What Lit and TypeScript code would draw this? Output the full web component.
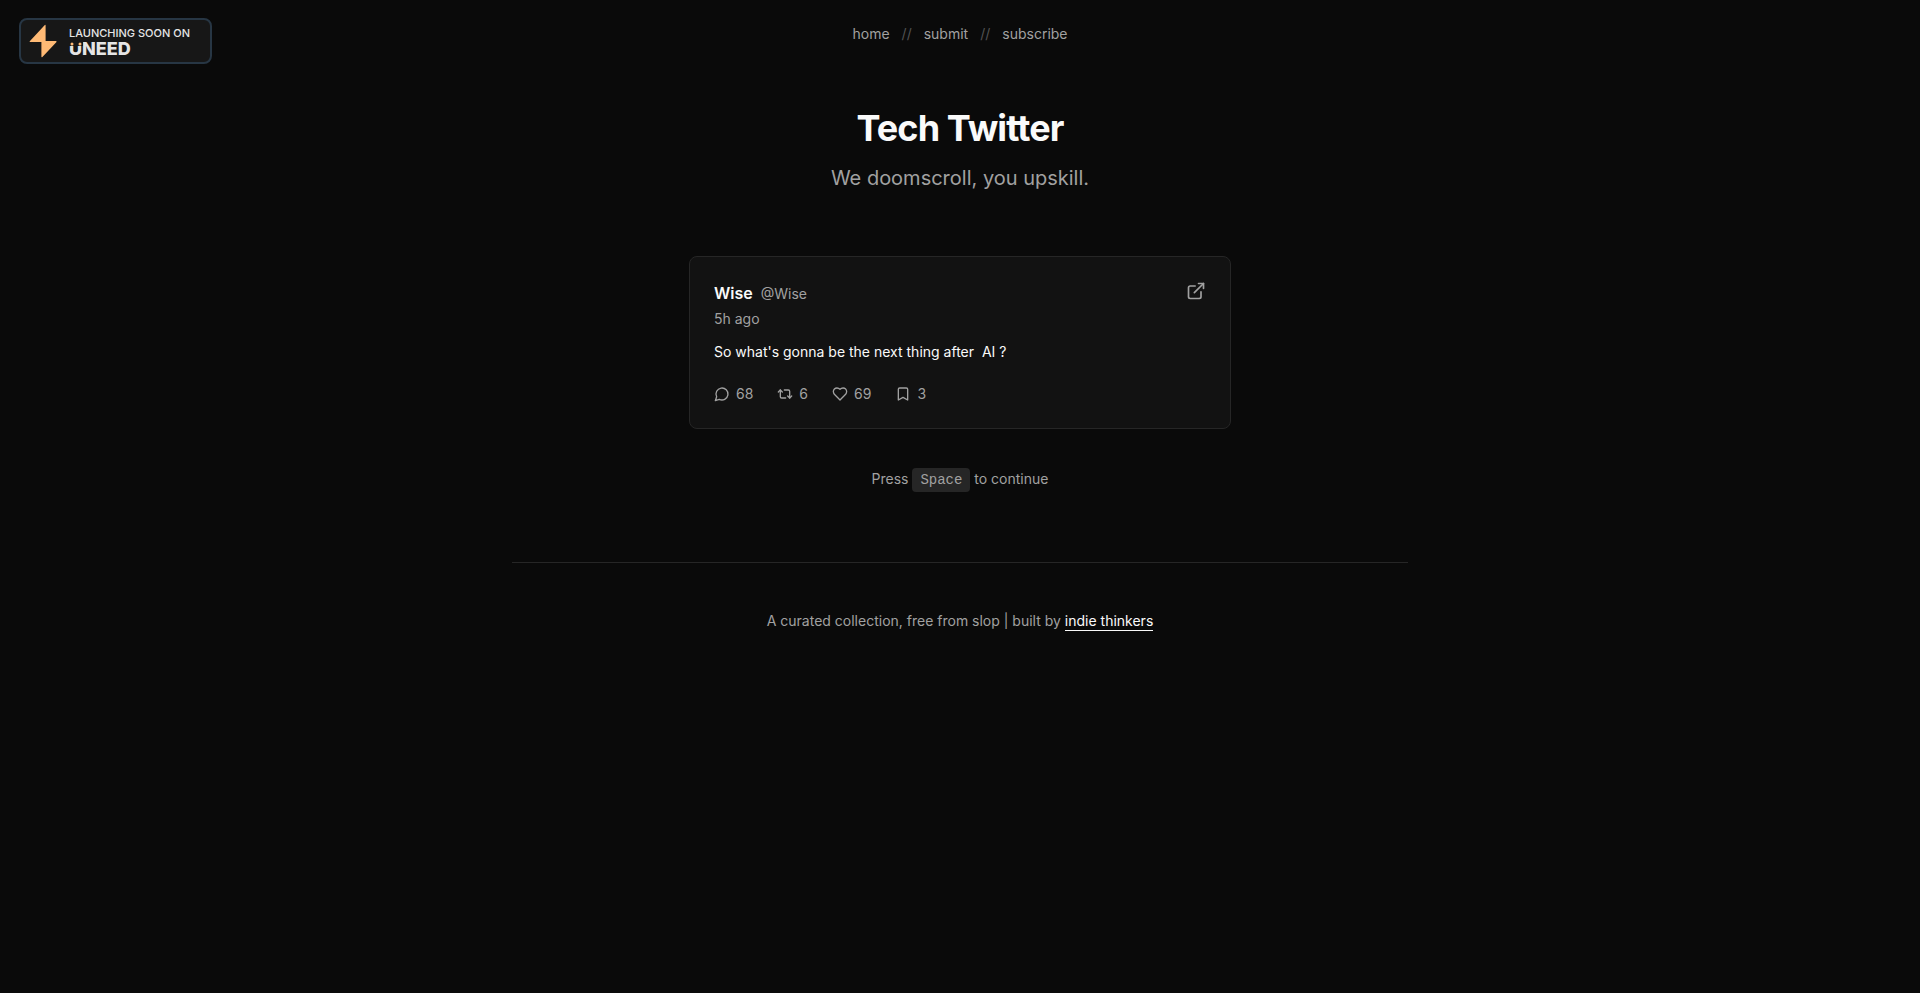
import { LitElement, html, css, svg } from "lit";
import { customElement, property } from "lit/decorators.js";

const icons = {
  reply: svg`<path d="M7.9 20A9 9 0 1 0 4 16.1L2 22Z" />`,
  repost: svg`<path d="m2 9 3-3 3 3" /><path d="M13 18H7a2 2 0 0 1-2-2V6" /><path d="m22 15-3 3-3-3" /><path d="M11 6h6a2 2 0 0 1 2 2v10" />`,
  like: svg`<path d="M19 14c1.49-1.46 3-3.21 3-5.5A5.5 5.5 0 0 0 16.5 3c-1.76 0-3 .5-4.5 2-1.5-1.5-2.74-2-4.5-2A5.5 5.5 0 0 0 2 8.5c0 2.3 1.5 4.05 3 5.5l7 7Z" />`,
  bookmark: svg`<path d="m19 21-7-4-7 4V5a2 2 0 0 1 2-2h10a2 2 0 0 1 2 2v16z" />`,
  external: svg`<path d="M18 13v6a2 2 0 0 1-2 2H5a2 2 0 0 1-2-2V8a2 2 0 0 1 2-2h6" /><path d="M15 3h6v6" /><path d="M10 14 21 3" />`,
};

type IconName = keyof typeof icons;

@customElement("line-icon")
export class LineIcon extends LitElement {
  @property() name: IconName = "reply";

  static styles = css`
    :host {
      display: block;
      width: 16px;
      height: 16px;
    }
    .icon {
      display: block;
      width: 100%;
      height: 100%;
      fill: none;
      stroke: currentColor;
      stroke-width: 2;
      stroke-linecap: round;
      stroke-linejoin: round;
    }
  `;

  render() {
    return html`<svg class="icon" viewBox="0 0 24 24" aria-hidden="true">${icons[this.name]}</svg>`;
  }
}

@customElement("launch-badge")
export class LaunchBadge extends LitElement {
  static styles = css`
    :host {
      display: block;
    }
    .badge {
      display: flex;
      align-items: center;
      gap: 12px;
      box-sizing: border-box;
      height: 46px;
      padding: 0 20px 0 8px;
      border: 2px solid #273644;
      border-radius: 8px;
      background: #171717;
      color: #e5e5e5;
      text-decoration: none;
    }
    .bolt {
      width: 28px;
      height: 34px;
      fill: #ffba75;
    }
    .label {
      display: flex;
      flex-direction: column;
      gap: 1px;
    }
    .caption {
      font-size: 11px;
      line-height: 14px;
      font-weight: 500;
      white-space: nowrap;
    }
    .brand {
      position: relative;
      font-size: 18px;
      line-height: 16px;
      font-weight: 800;
    }
    .dots {
      position: absolute;
      top: 1px;
      left: 0;
      width: 14px;
      height: 4px;
      background: #171717;
      fill: #ffba75;
    }
  `;

  render() {
    return html`
      <a class="badge" href="#uneed">
        <svg class="bolt" viewBox="0 0 28 34" aria-hidden="true">
          <path d="M15.6 1.2 1 17q-.9 1 .4 1H12.400v14.500q0 1.400 1 .4L27.300 18.200q.9-1.100-.4-1.100H16.600V1.600q0-1.300-1-.4Z" />
        </svg>
        <span class="label">
          <span class="caption">LAUNCHING SOON ON</span>
          <span class="brand">UNEED<svg class="dots" viewBox="0 0 14 4" aria-hidden="true">
              <circle cx="3" cy="2" r="1.500" />
              <circle cx="11" cy="2" r="1.500" />
            </svg></span>
        </span>
      </a>
    `;
  }
}

@customElement("tweet-card")
export class TweetCard extends LitElement {
  static styles = css`
    :host {
      display: block;
    }
    .card {
      padding: 24px;
      border: 1px solid #262626;
      border-radius: 8px;
      background: #121212;
      color: #a1a1a1;
      font-size: 14px;
      line-height: 20px;
    }
    .head {
      display: flex;
      justify-content: space-between;
      align-items: flex-start;
    }
    .author {
      display: flex;
      align-items: baseline;
      gap: 8px;
    }
    .name {
      margin: 0;
      color: #fafafa;
      font-size: 16px;
      line-height: 24px;
      font-weight: 600;
    }
    .handle,
    .open {
      color: inherit;
      text-decoration: none;
    }
    .open line-icon {
      width: 20px;
      height: 20px;
    }
    .time {
      display: block;
      margin-top: 4px;
    }
    .body {
      margin: 12px 0 21px;
      color: #fafafa;
      line-height: 22px;
      white-space: pre-wrap;
    }
    .stats {
      display: flex;
      gap: 24px;
      margin: 0;
      padding: 0;
      list-style: none;
    }
    .stat {
      display: flex;
      align-items: center;
      gap: 6px;
    }
  `;

  private stats: { icon: IconName; label: string; count: number }[] = [
    { icon: "reply", label: "Replies", count: 68 },
    { icon: "repost", label: "Reposts", count: 6 },
    { icon: "like", label: "Likes", count: 69 },
    { icon: "bookmark", label: "Bookmarks", count: 3 },
  ];

  render() {
    return html`
      <article class="card">
        <header class="head">
          <div>
            <div class="author">
              <h2 class="name">Wise</h2>
              <a class="handle" href="#wise">@Wise</a>
            </div>
            <time class="time">5h ago</time>
          </div>
          <a class="open" href="#post" aria-label="Open post"><line-icon name="external"></line-icon></a>
        </header>
        <p class="body">${"So what's gonna be the next thing after  AI ?"}</p>
        <ul class="stats">
          ${this.stats.map(
            (s) => html`<li class="stat" aria-label=${s.label}>
              <line-icon name=${s.icon}></line-icon><span>${s.count}</span>
            </li>`
          )}
        </ul>
      </article>
    `;
  }
}

@customElement("app-root")
export class AppRoot extends LitElement {
  static styles = css`
    :host {
      display: block;
      box-sizing: border-box;
      min-height: 100vh;
      padding: 24px 16px;
      background: #0a0a0a;
      color: #a1a1a1;
      font-family: Inter, sans-serif;
      font-size: 14px;
      line-height: 20px;
    }
    .corner {
      position: absolute;
      top: 18px;
      left: 19px;
    }
    .nav {
      display: flex;
      justify-content: center;
      gap: 12px;
    }
    .nav-link {
      color: inherit;
      text-decoration: none;
    }
    .slash {
      color: #525252;
    }
    .page {
      max-width: 896px;
      margin: 0 auto;
      text-align: center;
    }
    .title {
      margin: 64px 0 16px;
      color: #fafafa;
      font-size: 36px;
      line-height: 40px;
      font-weight: 700;
      letter-spacing: -0.025em;
    }
    .tagline {
      margin: 0 0 64px;
      font-size: 20px;
      line-height: 28px;
    }
    .tweet {
      max-width: 542px;
      margin: 0 auto;
      text-align: left;
    }
    .hint {
      margin: 38px 0 0;
      line-height: 24px;
    }
    .key {
      padding: 4px 8px;
      border-radius: 4px;
      background: #262626;
      font-family: "Liberation Mono", monospace;
      font-size: 14px;
    }
    .footer {
      margin-top: 70px;
      padding-top: 48px;
      border-top: 1px solid #262626;
    }
    .credit {
      margin: 0;
    }
    .credit-link {
      padding-bottom: 1px;
      border-bottom: 1px solid #fafafa;
      color: #fafafa;
      text-decoration: none;
    }
  `;

  render() {
    return html`
      <launch-badge class="corner"></launch-badge>
      <nav class="nav">
        <a class="nav-link" href="#home">home</a>
        <span class="slash">//</span>
        <a class="nav-link" href="#submit">submit</a>
        <span class="slash">//</span>
        <a class="nav-link" href="#subscribe">subscribe</a>
      </nav>
      <main class="page">
        <h1 class="title">Tech Twitter</h1>
        <p class="tagline">We doomscroll, you upskill.</p>
        <tweet-card class="tweet"></tweet-card>
        <p class="hint">Press <kbd class="key">Space</kbd> to continue</p>
        <footer class="footer">
          <p class="credit">
            A curated collection, free from slop | built by
            <a class="credit-link" href="#indie-thinkers">indie thinkers</a>
          </p>
        </footer>
      </main>
    `;
  }
}
